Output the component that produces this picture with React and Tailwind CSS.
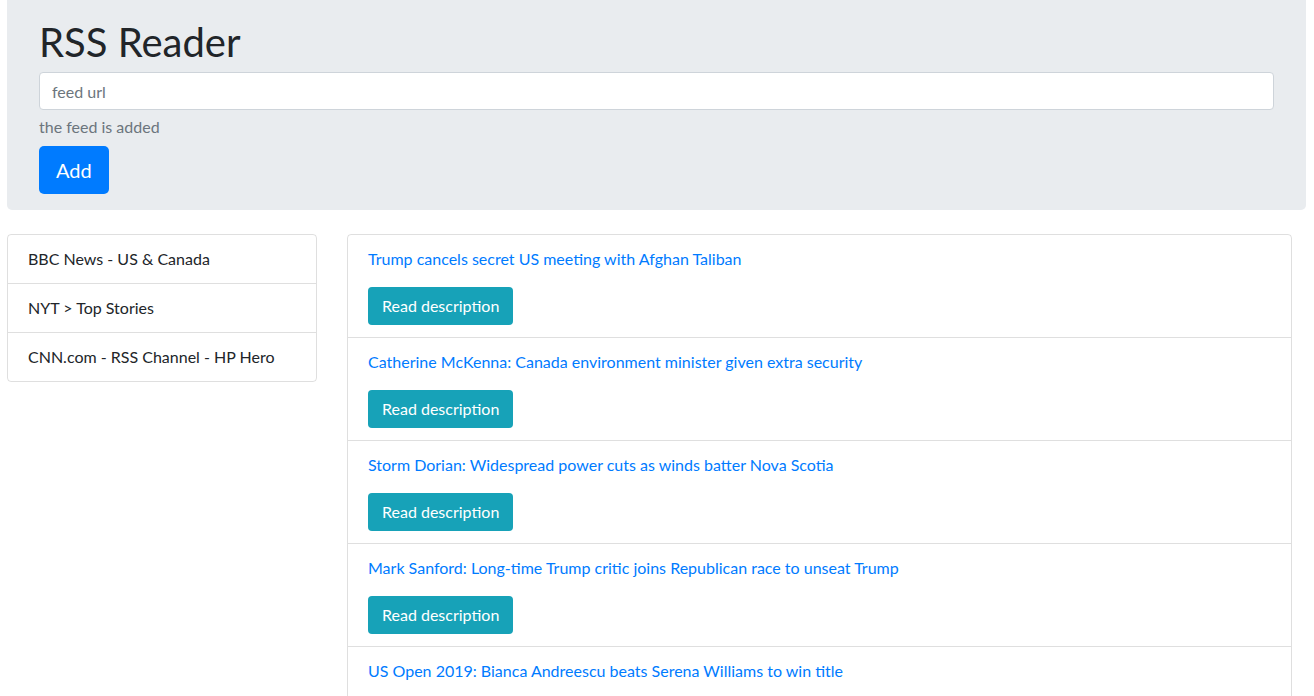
import React, { useState } from 'react'

const feeds = [
  'BBC News - US & Canada',
  'NYT > Top Stories',
  'CNN.com - RSS Channel - HP Hero',
]

const posts = [
  'Trump cancels secret US meeting with Afghan Taliban',
  'Catherine McKenna: Canada environment minister given extra security',
  'Storm Dorian: Widespread power cuts as winds batter Nova Scotia',
  'Mark Sanford: Long-time Trump critic joins Republican race to unseat Trump',
  'US Open 2019: Bianca Andreescu beats Serena Williams to win title',
]

export default function App(){
  const [url, setUrl] = useState('')

  return (
    <div className="h-[696px] overflow-hidden bg-white text-[#212529] font-['Lato','Open_Sans',sans-serif] text-base leading-6">
      <div className="mx-[7px] w-[1299px] bg-[#e9ecef] rounded-b-[5px] px-8 pt-[18px] pb-4">
        <h1 className="text-[40px] leading-[48px] font-normal mb-[6px]">RSS Reader</h1>
        <input
          value={url}
          onChange={e => setUrl(e.target.value)}
          placeholder="feed url"
          className="block w-full h-[38px] px-3 bg-white border border-[#ced4da] rounded text-base text-[#495057] placeholder:text-[#6c757d] outline-none"
        />
        <div className="text-[#6c757d] mt-[5px] leading-6">the feed is added</div>
        <button className="mt-[7px] h-12 px-[17px] bg-[#007bff] text-white text-xl rounded-[5px]">Add</button>
      </div>

      <div className="flex mt-6 pl-[7px]">
        <div className="w-[310px] shrink-0">
          <ul className="border border-black/[.125] rounded">
            {feeds.map((f, i) => (
              <li key={f} className={'px-5 py-3 ' + (i > 0 ? 'border-t border-black/[.125]' : '')}>{f}</li>
            ))}
          </ul>
        </div>
        <div className="ml-[30px] w-[945px] shrink-0">
          <ul className="border border-black/[.125] rounded-t">
            {posts.map((p, i) => (
              <li key={p} className={'px-5 pt-3 pb-3 ' + (i > 0 ? 'border-t border-black/[.125]' : '')}>
                <a href="#" className="block text-[#007bff] mb-4">{p}</a>
                <button className="h-[38px] px-[14px] bg-[#17a2b8] text-white rounded">Read description</button>
              </li>
            ))}
          </ul>
        </div>
      </div>
    </div>
  )
}
